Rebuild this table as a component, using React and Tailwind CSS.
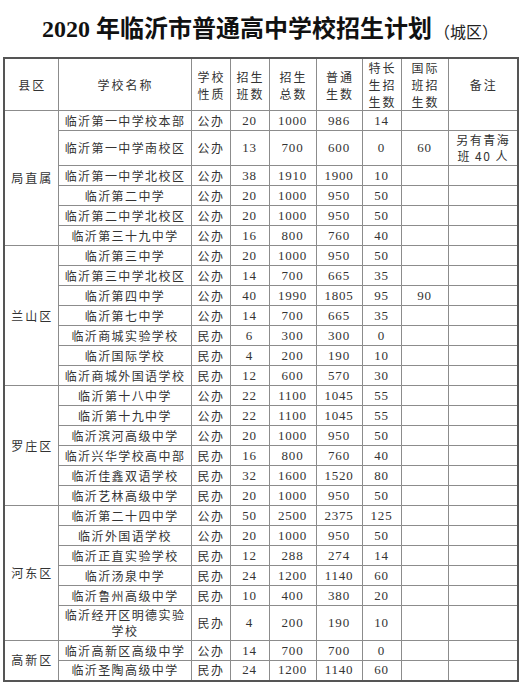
const groups = [
  {
    name: '局直属',
    rows: [
      ['临沂第一中学校本部', '公办', '20', '1000', '986', '14', '', ''],
      ['临沂第一中学南校区', '公办', '13', '700', '600', '0', '60', '另有青海|班 40 人'],
      ['临沂第一中学北校区', '公办', '38', '1910', '1900', '10', '', ''],
      ['临沂第二中学', '公办', '20', '1000', '950', '50', '', ''],
      ['临沂第二中学北校区', '公办', '20', '1000', '950', '50', '', ''],
      ['临沂第三十九中学', '公办', '16', '800', '760', '40', '', ''],
    ],
  },
  {
    name: '兰山区',
    rows: [
      ['临沂第三中学', '公办', '20', '1000', '950', '50', '', ''],
      ['临沂第三中学北校区', '公办', '14', '700', '665', '35', '', ''],
      ['临沂第四中学', '公办', '40', '1990', '1805', '95', '90', ''],
      ['临沂第七中学', '公办', '14', '700', '665', '35', '', ''],
      ['临沂商城实验学校', '民办', '6', '300', '300', '0', '', ''],
      ['临沂国际学校', '民办', '4', '200', '190', '10', '', ''],
      ['临沂商城外国语学校', '民办', '12', '600', '570', '30', '', ''],
    ],
  },
  {
    name: '罗庄区',
    rows: [
      ['临沂第十八中学', '公办', '22', '1100', '1045', '55', '', ''],
      ['临沂第十九中学', '公办', '22', '1100', '1045', '55', '', ''],
      ['临沂滨河高级中学', '公办', '20', '1000', '950', '50', '', ''],
      ['临沂兴华学校高中部', '民办', '16', '800', '760', '40', '', ''],
      ['临沂佳鑫双语学校', '民办', '32', '1600', '1520', '80', '', ''],
      ['临沂艺林高级中学', '民办', '20', '1000', '950', '50', '', ''],
    ],
  },
  {
    name: '河东区',
    rows: [
      ['临沂第二十四中学', '公办', '50', '2500', '2375', '125', '', ''],
      ['临沂外国语学校', '公办', '20', '1000', '950', '50', '', ''],
      ['临沂正直实验学校', '民办', '12', '288', '274', '14', '', ''],
      ['临沂汤泉中学', '民办', '24', '1200', '1140', '60', '', ''],
      ['临沂鲁州高级中学', '民办', '10', '400', '380', '20', '', ''],
      ['临沂经开区明德实验|学校', '民办', '4', '200', '190', '10', '', ''],
    ],
  },
  {
    name: '高新区',
    rows: [
      ['临沂高新区高级中学', '公办', '14', '700', '700', '0', '', ''],
      ['临沂圣陶高级中学', '民办', '24', '1200', '1140', '60', '', ''],
    ],
  },
];

const headers = [
  '县区',
  '学校名称',
  '学校|性质',
  '招生|班数',
  '招生|总数',
  '普通|生数',
  '特长|生招|生数',
  '国际|班招|生数',
  '备注',
];

const cjk = "font-['Noto_Sans_CJK_SC',sans-serif]";
const num = "font-['Liberation_Serif',serif]";
const cell = 'border border-[#8c8c8c] text-center align-middle p-0 text-[12px] leading-[16px]';

function Lines({ text, className }) {
  const parts = text.split('|');
  return (
    <div className={className}>
      {parts.map((p, i) => (
        <div key={i}>{p}</div>
      ))}
    </div>
  );
}

export default function App() {
  return (
    <div className="w-[520px] h-[686px] bg-white text-[#333] overflow-hidden">
      <div className="h-[57px] flex items-center justify-center pb-[2px] pl-[20px]">
        <span className="text-[24px] font-bold text-[#111] leading-none">
          <span className={num}>2020 </span>
          <span className={cjk}>年临沂市普通高中学校招生计划</span>
        </span>
        <span className={`${cjk} text-[16px] text-[#222] ml-[2px] mt-[6px]`}>（城区）</span>
      </div>

      <table className="ml-[3px] w-[514px] table-fixed border-collapse border-2 border-[#555]">
        <colgroup>
          <col className="w-[54px]" />
          <col className="w-[133px]" />
          <col className="w-[39px]" />
          <col className="w-[39px]" />
          <col className="w-[47px]" />
          <col className="w-[46px]" />
          <col className="w-[39px]" />
          <col className="w-[47px]" />
          <col className="w-[70px]" />
        </colgroup>
        <thead>
          <tr className="h-[51px]">
            {headers.map((h) => (
              <th key={h} className={`${cell} font-normal`}>
                <Lines
                  text={h}
                  className={`${cjk} text-[12px] leading-[17px] tracking-[2px] pl-[2px]`}
                />
              </th>
            ))}
          </tr>
        </thead>
        <tbody>
          {groups.map((g) =>
            g.rows.map((r, i) => {
              const tall = r[0].includes('|') || r[7].includes('|');
              return (
                <tr key={g.name + i} className={tall ? 'h-[35px]' : 'h-[20px]'}>
                  {i === 0 && (
                    <td rowSpan={g.rows.length} className={`${cell} ${cjk} tracking-[2px] pl-[2px]`}>
                      {g.name}
                    </td>
                  )}
                  <td className={cell}>
                    <Lines
                      text={r[0]}
                      className={`${cjk} leading-[16px] tracking-[1.4px] pl-[1px]`}
                    />
                  </td>
                  <td className={`${cell} ${cjk} tracking-[1.5px] pl-[1px]`}>{r[1]}</td>
                  {r.slice(2, 7).map((v, j) => (
                    <td key={j} className={`${cell} ${num} text-[13px] tracking-[0.8px]`}>
                      {v}
                    </td>
                  ))}
                  <td className={cell}>
                    <Lines
                      text={r[7]}
                      className={`${cjk} leading-[16px] tracking-[1.5px] pl-[1px]`}
                    />
                  </td>
                </tr>
              );
            })
          )}
        </tbody>
      </table>
    </div>
  );
}
